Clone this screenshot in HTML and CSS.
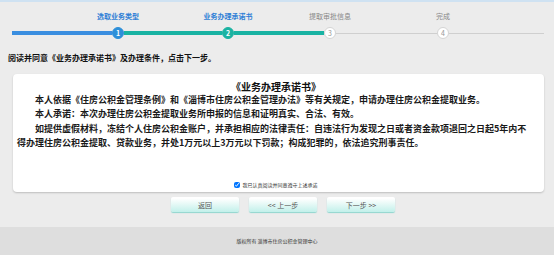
FILE: index.html
```html
<!DOCTYPE html>
<html lang="zh-CN">
<head>
    <meta charset="UTF-8">
    <meta name="viewport" content="width=device-width, initial-scale=1.0">
    <title>业务办理承诺书</title>
    <link rel="stylesheet" href="styles.css">
</head>
<body>
    <div class="page">
        <!-- Steps -->
        <div class="steps">
            <span class="step-label done c1">选取业务类型</span>
            <span class="step-label done c2">业务办理承诺书</span>
            <span class="step-label c3">提取审批信息</span>
            <span class="step-label c4">完成</span>

            <span class="seg seg-blue"></span>
            <span class="dot dot-blue">1</span>
            <span class="seg seg-teal"></span>
            <span class="dot dot-teal">2</span>
            <span class="seg seg-teal"></span>
            <span class="dot">3</span>
            <span class="seg seg-gray"></span>
            <span class="dot">4</span>
            <span class="seg seg-gray"></span>
        </div>

        <p class="hint">阅读并同意《业务办理承诺书》及办理条件，点击下一步。</p>

        <!-- Promise -->
        <div class="card">
            <h1 class="card-title">《业务办理承诺书》</h1>
            <p class="para">本人依据《住房公积金管理条例》和《淄博市住房公积金管理办法》等有关规定，申请办理住房公积金提取业务。</p>
            <p class="para">本人承诺：本次办理住房公积金提取业务所申报的信息和证明真实、合法、有效。</p>
            <p class="para">如提供虚假材料，冻结个人住房公积金账户，并承担相应的法律责任：自违法行为发现之日或者资金款项退回之日起5年内不得办理住房公积金提取、贷款业务，并处1万元以上3万元以下罚款；构成犯罪的，依法追究刑事责任。</p>

            <label class="agree">
                <input type="checkbox" checked>
                <span>我已认真阅读并同意遵守上述承诺</span>
            </label>
        </div>

        <div class="actions">
            <button class="btn">返回</button>
            <button class="btn">&lt;&lt; 上一步</button>
            <button class="btn">下一步 &gt;&gt;</button>
        </div>
    </div>

    <div class="footer">版权所有 淄博市住房公积金管理中心</div>
</body>
</html>
```

FILE: styles.css
```css
body {
    margin: 0;
    font-family: "Noto Sans CJK SC", "Noto Sans", sans-serif;
    background: #ececec;
    color: #222;
    border-top: 2px solid #cfe2f2;
    height: 253px;
    display: flex;
    flex-direction: column;
    overflow: hidden;
}

.page {
    flex: 1;
}

/* steps */
.steps {
    display: grid;
    grid-template-columns: 100px 12px 98px 12px 90px 12px 101px 12px 95px;
    grid-template-rows: 22px 12px;
    margin: 0 0 0 12px;
    padding-top: 3px;
    align-items: center;
}

.step-label {
    grid-row: 1;
    justify-self: center;
    white-space: nowrap;
    font-size: 7px;
    color: #888;
}

.step-label.done {
    color: #2f7fd6;
    font-weight: 700;
}

.c1 { grid-column: 2; }
.c2 { grid-column: 4; }
.c3 { grid-column: 6; }
.c4 { grid-column: 8; }

.seg {
    grid-row: 2;
    height: 4px;
}

.seg-blue { background: #3a8ee0; }
.seg-teal { background: #19b3a3; }
.seg-gray {
    height: 1px;
    background: #cfcfcf;
}

.dot {
    grid-row: 2;
    width: 12px;
    height: 12px;
    box-sizing: border-box;
    border-radius: 50%;
    background: #fff;
    border: 1px solid #d4d4d4;
    color: #999;
    font-size: 7px;
    line-height: 10px;
    text-align: center;
}

.dot-blue {
    background: #2d8fd9;
    border-color: #2d8fd9;
    color: #fff;
    font-weight: 700;
}

.dot-teal {
    background: #1bb3a2;
    border-color: #1bb3a2;
    color: #fff;
    font-weight: 700;
}

.hint {
    margin: 13px 0 0 8px;
    font-size: 8px;
    line-height: 12px;
    font-weight: 700;
    color: #111;
}

/* card */
.card {
    margin: 10px 10px 0 13px;
    height: 118px;
    box-sizing: border-box;
    background: #fff;
    border-radius: 4px;
    box-shadow: 0 1px 2px rgba(0,0,0,0.2);
    padding: 6px 9px 4px 4px;
    display: flex;
    flex-direction: column;
}

.card-title {
    margin: 0 0 -1px;
    text-align: center;
    font-size: 10px;
    line-height: 14px;
    font-weight: 700;
    color: #111;
}

.para {
    margin: 0;
    font-size: 9px;
    line-height: 14.3px;
    font-weight: 700;
    text-indent: 2em;
    color: #1a1a1a;
}

.agree {
    margin-top: auto;
    display: flex;
    align-items: center;
    justify-content: center;
    gap: 2px;
    font-size: 5px;
    color: #333;
}

.agree input {
    margin: 0;
    width: 6px;
    height: 6px;
}

/* buttons */
.actions {
    display: flex;
    justify-content: center;
    gap: 10px;
    margin: 5px 0 0 12px;
}

.btn {
    width: 68px;
    height: 15px;
    padding: 0;
    border: none;
    border-radius: 2px;
    background: linear-gradient(#ffffff 10%, #c2f0ea);
    box-shadow: 0 1px 1px #8fd6cf;
    font-family: inherit;
    font-size: 7px;
    color: #555;
    cursor: pointer;
}

.footer {
    height: 28px;
    line-height: 28px;
    background: #dedede;
    text-align: center;
    font-size: 5px;
    color: #333;
}
```
